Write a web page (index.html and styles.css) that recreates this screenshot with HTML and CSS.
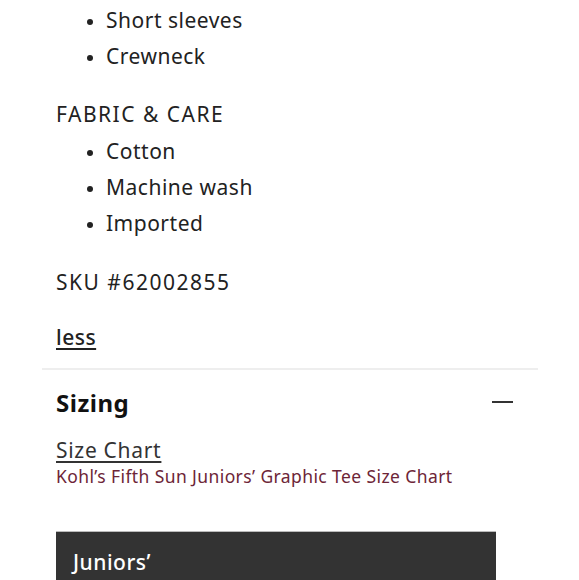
FILE: index.html
```html
<!DOCTYPE html>
<html>
<head>
<meta charset="utf-8">
<link rel="stylesheet" href="styles.css">
</head>
<body>
<div class="page">
  <div class="details">
    <ul class="bullets first">
      <li>Short sleeves</li>
      <li>Crewneck</li>
    </ul>
    <p class="heading">FABRIC &amp; CARE</p>
    <ul class="bullets">
      <li>Cotton</li>
      <li>Machine wash</li>
      <li>Imported</li>
    </ul>
    <p class="sku">SKU #62002855</p>
    <a class="less" href="#">less</a>
  </div>
  <div class="section">
    <div class="section-head">
      <h2 class="section-title">Sizing</h2>
      <span class="minus"></span>
    </div>
    <a class="chart-link" href="#">Size Chart</a>
    <p class="chart-name">Kohl’s Fifth Sun Juniors’ Graphic Tee Size Chart</p>
    <div class="chart">
      <div class="chart-title">Juniors’</div>
    </div>
  </div>
</div>
</body>
</html>
```
FILE: styles.css
```css
html, body {
  margin: 0;
  padding: 0;
  background: #fff;
}
body {
  font-family: "Noto Sans", "Liberation Sans", sans-serif;
  color: #222;
  font-size: 21px;
  letter-spacing: 0.5px;
  overflow: hidden;
}
.page {
  width: 579px;
  height: 580px;
  overflow: hidden;
}
.details {
  padding: 2px 0 0 56px;
}
.bullets {
  margin: 0;
  padding: 0 0 0 50px;
  line-height: 36px;
}
.bullets li::marker {
  font-size: 17px;
}
.heading, .sku {
  margin: 22px 0 1px 0;
  line-height: 36px;
  letter-spacing: 1.5px;
}
.sku {
  margin: 23px 0 0 0;
}
.less {
  display: block;
  margin-top: 19px;
  line-height: 36px;
  color: #222;
  font-weight: 500;
  text-decoration: underline;
  text-underline-offset: 3px;
  width: max-content;
}
.section {
  margin: 13px 41px 0 42px;
  border-top: 2px solid #eeeeee;
  padding: 0 0 0 14px;
}
.section-head {
  display: flex;
  align-items: center;
  justify-content: space-between;
  height: 64px;
  padding-right: 25px;
}
.section-title {
  margin: 0;
  font-size: 24px;
  font-weight: 700;
  letter-spacing: 0.5px;
  color: #111;
}
.minus {
  width: 21px;
  height: 2px;
  background: #333;
}
.chart-link {
  display: block;
  margin-top: 2px;
  width: max-content;
  font-size: 21px;
  letter-spacing: 0.7px;
  line-height: 28px;
  color: #333;
  text-decoration: underline;
  text-underline-offset: 3px;
}
.chart-name {
  margin: 0;
  font-size: 17.5px;
  letter-spacing: 0.4px;
  line-height: 24px;
  color: #6d2537;
}
.chart {
  margin-top: 43px;
  width: 440px;
  background: #333;
  border-top: 1px solid #bbb;
  height: 60px;
}
.chart-title {
  padding: 15px 0 0 17px;
  color: #fff;
  font-size: 21px;
  font-weight: 500;
  line-height: 30px;
}
```
